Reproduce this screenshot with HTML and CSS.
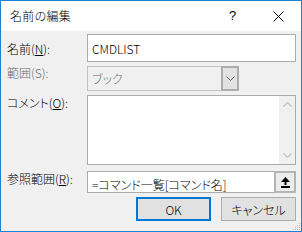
FILE: index.html
```html
<!DOCTYPE html>
<html lang="ja">
<head>
    <meta charset="UTF-8">
    <title>名前の編集</title>
    <link rel="stylesheet" href="styles.css">
</head>
<body>
    <div class="win">
        <div class="titlebar">
            <span class="title">名前の編集</span>
            <span class="help">?</span>
            <svg class="close" width="11" height="11" viewBox="0 0 11 11">
                <path d="M0.5 0.5 L10.5 10.5 M10.5 0.5 L0.5 10.5" stroke="#000" stroke-width="1" fill="none"/>
            </svg>
        </div>

        <div class="content">
            <div class="row row-name">
                <label class="lbl">名前(<u>N</u>):</label>
                <div class="field name-field">CMDLIST</div>
            </div>

            <div class="row row-range">
                <label class="lbl disabled">範囲(S):</label>
                <div class="combo">
                    <span class="combo-text">ブック</span>
                    <span class="drop">
                        <svg width="9" height="5" viewBox="0 0 9 5">
                            <path d="M0.5 0.5 L4.5 4.5 L8.5 0.5" stroke="#606060" stroke-width="1" fill="none"/>
                        </svg>
                    </span>
                </div>
            </div>

            <div class="row row-comment">
                <label class="lbl">コメント(<u>O</u>):</label>
                <div class="field memo">
                    <div class="memo-text"></div>
                    <div class="vscroll">
                        <svg width="9" height="5" viewBox="0 0 9 5">
                            <path d="M0.5 4.5 L4.5 0.5 L8.5 4.5" stroke="#c4c4c4" stroke-width="1.4" fill="none"/>
                        </svg>
                        <svg width="9" height="5" viewBox="0 0 9 5">
                            <path d="M0.5 0.5 L4.5 4.5 L8.5 0.5" stroke="#c4c4c4" stroke-width="1.4" fill="none"/>
                        </svg>
                    </div>
                </div>
            </div>

            <div class="row row-ref">
                <label class="lbl">参照範囲(<u>R</u>):</label>
                <div class="field ref">
                    <span class="ref-text">=コマンド一覧[コマンド名]</span>
                    <span class="ref-btn">
                        <svg width="9" height="11" viewBox="0 0 9 11">
                            <path d="M4.5 0 L9 5 L0 5 Z" fill="#000"/>
                            <rect x="3.5" y="4" width="2" height="4" fill="#000"/>
                            <rect x="0" y="9" width="9" height="2" fill="#000"/>
                        </svg>
                    </span>
                </div>
            </div>

            <div class="buttons">
                <button class="btn btn-default">OK</button>
                <button class="btn">キャンセル</button>
            </div>
        </div>

        <svg class="grip" width="10" height="10" viewBox="0 0 10 10">
            <rect x="8" y="2" width="1" height="1" fill="#b8b8b8"/>
            <rect x="6" y="4" width="1" height="1" fill="#b8b8b8"/>
            <rect x="8" y="4" width="1" height="1" fill="#b8b8b8"/>
            <rect x="4" y="6" width="1" height="1" fill="#b8b8b8"/>
            <rect x="6" y="6" width="1" height="1" fill="#b8b8b8"/>
            <rect x="8" y="6" width="1" height="1" fill="#b8b8b8"/>
            <rect x="2" y="8" width="1" height="1" fill="#b8b8b8"/>
            <rect x="4" y="8" width="1" height="1" fill="#b8b8b8"/>
            <rect x="6" y="8" width="1" height="1" fill="#b8b8b8"/>
            <rect x="8" y="8" width="1" height="1" fill="#b8b8b8"/>
        </svg>
    </div>
</body>
</html>
```

FILE: styles.css
```css
body {
    margin: 0;
    font-family: "Noto Sans CJK JP", "Noto Sans", sans-serif;
    font-size: 12px;
    font-weight: 300;
    line-height: 16px;
    font-feature-settings: "palt";
    color: #000;
    background-color: #fff;
}
.win {
    position: relative;
    width: 302px;
    height: 232px;
    box-sizing: border-box;
    border: 1px solid #1b82d5;
    background-color: #f0f0f0;
    overflow: hidden;
}
.titlebar {
    display: flex;
    align-items: center;
    height: 30px;
    padding-left: 9px;
    background-color: #fff;
}
.title {
    flex: 1;
    letter-spacing: 0.3px;
}
.help {
    width: 8px;
    margin-right: 36px;
    font-family: "Liberation Sans", sans-serif;
    font-size: 13px;
}
.close {
    margin-right: 17px;
}
.content {
    padding: 3px 5px 0 6px;
}
.row {
    display: flex;
    align-items: flex-start;
}
.lbl {
    width: 80px;
    flex-shrink: 0;
    white-space: nowrap;
}
.lbl u {
    text-underline-offset: 1px;
}
.disabled {
    color: #6d6d6d;
}
.field {
    flex: 1;
    box-sizing: border-box;
    border: 1px solid #ababab;
    background-color: #fff;
}
.row-name {
    height: 28px;
}
.row-name .lbl {
    padding-top: 7px;
}
.name-field {
    height: 28px;
    padding: 6px 3px 0 4px;
}
.row-range {
    margin-top: 4px;
    height: 25px;
}
.row-range .lbl {
    margin-top: -1px;
}
.combo {
    display: flex;
    width: 152px;
    height: 25px;
    box-sizing: border-box;
    border: 1px solid #c2c2c2;
    background-color: #f0f0f0;
}
.combo-text {
    flex: 1;
    padding: 4px 0 0 4px;
    color: #6d6d6d;
}
.drop {
    display: flex;
    align-items: center;
    justify-content: center;
    width: 18px;
    margin: -1px -1px -1px 0;
    box-sizing: border-box;
    border: 2px solid #acacac;
    background-color: #e2e2e2;
}
.row-comment {
    margin-top: 4px;
}
.memo {
    display: flex;
    height: 70px;
}
.memo-text {
    flex: 1;
}
.vscroll {
    display: flex;
    flex-direction: column;
    justify-content: space-between;
    align-items: center;
    width: 16px;
    padding: 6px 0 6px;
    background-color: #f0f0f0;
}
.row-ref {
    margin-top: 6px;
}
.ref {
    display: flex;
    height: 22px;
}
.ref-text {
    flex: 1;
    padding: 5px 0 0 4px;
    white-space: nowrap;
}
.ref-btn {
    display: flex;
    align-items: center;
    justify-content: center;
    width: 22px;
    margin: -1px -1px -1px 0;
    box-sizing: border-box;
    border: 2px solid #b4b4b4;
    background-color: #ececec;
}
.buttons {
    display: flex;
    justify-content: flex-end;
    gap: 10px;
    margin-top: 4px;
}
.btn {
    width: 75px;
    height: 24px;
    padding: 0;
    box-sizing: border-box;
    border: 1px solid #adadad;
    background-color: #e1e1e1;
    font-family: inherit;
    font-size: 12px;
    font-weight: 300;
    font-feature-settings: "palt";
    color: #000;
}
.btn-default {
    border: 2px solid #0078d7;
}
.grip {
    position: absolute;
    right: 0;
    bottom: 0;
}
```
